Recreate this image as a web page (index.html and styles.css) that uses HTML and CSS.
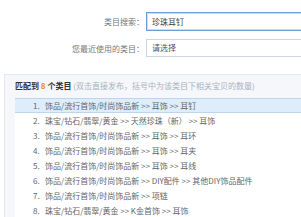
FILE: index.html
```html
<!DOCTYPE html>
<html lang="zh">
<head>
<meta charset="utf-8">
<link rel="stylesheet" href="styles.css">
</head>
<body>
<div class="page">
  <div class="form">
    <div class="row">
      <label class="label">类目搜索：</label>
      <div class="input focus">珍珠耳钉</div>
    </div>
    <div class="row">
      <label class="label">您最近使用的类目：</label>
      <div class="input plain">请选择</div>
    </div>
  </div>
  <div class="panel">
    <div class="head"><b>匹配到 <span class="num">8</span> 个类目</b> <span class="tip">(双击直接发布，括号中为该类目下相关宝贝的数量)</span></div>
    <ol class="list">
      <li class="on"><span class="n">1.</span>饰品/流行首饰/时尚饰品新 &gt;&gt; 耳饰 &gt;&gt; 耳钉</li>
      <li><span class="n">2.</span>珠宝/钻石/翡翠/黄金 &gt;&gt; 天然珍珠（新） &gt;&gt; 耳饰</li>
      <li><span class="n">3.</span>饰品/流行首饰/时尚饰品新 &gt;&gt; 耳饰 &gt;&gt; 耳环</li>
      <li><span class="n">4.</span>饰品/流行首饰/时尚饰品新 &gt;&gt; 耳饰 &gt;&gt; 耳夹</li>
      <li><span class="n">5.</span>饰品/流行首饰/时尚饰品新 &gt;&gt; 耳饰 &gt;&gt; 耳线</li>
      <li><span class="n">6.</span>饰品/流行首饰/时尚饰品新 &gt;&gt; DIY配件 &gt;&gt; 其他DIY饰品配件</li>
      <li><span class="n">7.</span>饰品/流行首饰/时尚饰品新 &gt;&gt; 项链</li>
      <li><span class="n">8.</span>珠宝/钻石/翡翠/黄金 &gt;&gt; K金首饰 &gt;&gt; 耳饰</li>
    </ol>
  </div>
</div>
</body>
</html>
```
FILE: styles.css
```css
html, body {
  margin: 0;
  padding: 0;
  background: #fff;
}
body {
  font-family: "Noto Sans CJK SC", "Liberation Sans", sans-serif;
  font-size: 8px;
  color: #555;
  width: 301px;
  height: 217px;
  overflow: hidden;
}
.page {
  padding-top: 12px;
}
.form {
  display: flex;
  flex-direction: column;
  gap: 8px;
}
.row {
  display: flex;
  align-items: center;
}
.label {
  width: 146px;
  text-align: right;
  color: #777;
  padding-right: 2px;
  box-sizing: border-box;
  white-space: nowrap;
}
.input {
  flex: 1;
  height: 19px;
  line-height: 17px;
  box-sizing: border-box;
  padding-left: 5px;
  color: #444;
  background: #fff;
}
.input.focus {
  border: 1px solid #6d9fd6;
  border-right: none;
  box-shadow: inset 1px 1px 0 #c9dcf1, inset 0 -1px 0 #c9dcf1;
}
.input.plain {
  height: 18px;
  line-height: 16px;
  border: 1px solid #cdd7e3;
  border-right: none;
  color: #555;
}
.panel {
  margin: 17px 0 0 4px;
  background: #f5f7fa;
  border-top: 1px solid #e4e9ef;
  border-left: 1px solid #e4e9ef;
  padding-top: 3px;
}
.head {
  padding-left: 10px;
  height: 16px;
  line-height: 16px;
  white-space: nowrap;
}
.head b {
  color: #333;
  font-weight: bold;
}
.head .num {
  color: #f08a24;
}
.tip {
  color: #aab3bf;
}
.list {
  list-style: none;
  margin: 4px 0 0 10px;
  padding: 0;
  background: #fff;
}
.list li {
  height: 15px;
  line-height: 15px;
  padding-left: 18px;
  white-space: nowrap;
  color: #666;
}
.list li.on {
  background: #deedfb;
  border-top: 1px solid #bcd6ef;
  border-bottom: 1px solid #bcd6ef;
  height: 13px;
  line-height: 13px;
}
.n {
  display: inline-block;
  width: 12px;
}
```
